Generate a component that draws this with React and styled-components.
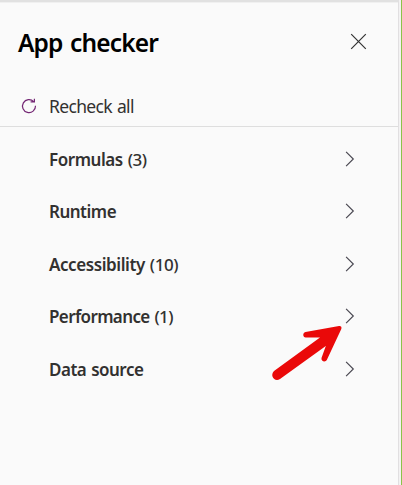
import React from "react";
import styled, { createGlobalStyle } from "styled-components";

const GlobalStyle = createGlobalStyle`
  * { box-sizing: border-box; }
  body { margin: 0; background: #fafafa; }
`;

const Frame = styled.div`
  position: relative;
  display: flex;
  width: 402px;
  height: 485px;
  overflow: hidden;
  background: #f3f2f3;
  border-right: 1px solid #8bc34a;
  font-family: "Noto Sans", "Open Sans", sans-serif;
`;

const Panel = styled.aside`
  width: 399px;
  height: 485px;
  background: #fafafa;
  border-top: 2px solid #e1e1e1;
  border-right: 1px solid #e1dfe1;
  box-shadow: inset 0 1px 0 #f0f0f0;
`;

const Header = styled.header`
  display: flex;
  align-items: center;
  justify-content: space-between;
  height: 82px;
  padding: 0 31px 0 18px;
`;

const Title = styled.h1`
  margin: 0 0 1px;
  font-size: 24.5px;
  font-weight: 600;
  line-height: 32px;
  letter-spacing: -0.85px;
  word-spacing: 2px;
  color: #000;
  white-space: nowrap;
`;

const IconButton = styled.button`
  display: flex;
  padding: 0;
  border: 0;
  background: none;
  margin-bottom: 4px;
`;

const RecheckBar = styled.button`
  display: flex;
  align-items: center;
  width: 100%;
  height: 43px;
  padding: 2px 0 0 20px;
  gap: 11px;
  border: 0;
  border-bottom: 1px solid #dedede;
  background: none;
  font-family: inherit;
`;

const Label = styled.span`
  font-size: ${(p) => p.$size || 17}px;
  font-weight: ${(p) => p.$weight || 600};
  line-height: 24px;
  letter-spacing: ${(p) => p.$tracking || 0}px;
  word-spacing: 1px;
  color: #323130;
  white-space: nowrap;
`;

const Count = styled.span`
  font-weight: 500;
`;

const List = styled.ul`
  margin: 0;
  padding: 6px 0 0;
  list-style: none;
`;

const Row = styled.li`
  display: flex;
  align-items: center;
  justify-content: space-between;
  height: 52.5px;
  padding: 0.6px 43px 0 49px;
`;

const ChevronIcon = styled.svg`
  margin-bottom: 2px;
`;

const Pointer = styled.svg`
  position: absolute;
  left: 265px;
  top: 315px;
`;

const rows = [
  { label: "Formulas", count: 3, tracking: -0.45 },
  { label: "Runtime", tracking: -0.5 },
  { label: "Accessibility", count: 10, tracking: -0.42 },
  { label: "Performance", count: 1, tracking: -0.63 },
  { label: "Data source", tracking: -0.5 },
];

const Chevron = () => (
  <ChevronIcon width="10" height="16" viewBox="0 0 10 16" fill="none" stroke="#484650" strokeWidth="1.15">
    <path d="M1.1 .8 8.3 8 1.1 15.2" />
  </ChevronIcon>
);

export default function App() {
  return (
    <Frame>
      <GlobalStyle />
      <Panel>
        <Header>
          <Title>App checker</Title>
          <IconButton aria-label="Close">
            <svg width="17" height="17" viewBox="0 0 17 17" stroke="#333" strokeWidth="1.2">
              <path d="M1.2 1.2 15.8 15.8M15.8 1.2 1.2 15.8" />
            </svg>
          </IconButton>
        </Header>
        <RecheckBar>
          <svg width="18" height="18" viewBox="0 0 18 18" fill="none" stroke="#742774" strokeWidth="1.2">
            <path d="M13.7 4.6A6.5 6.5 0 1 0 15.5 8.8M14.4 1.8V4.9H10.6" />
          </svg>
          <Label $size={17.5} $weight={400} $tracking={-0.65}>Recheck all</Label>
        </RecheckBar>
        <List>
          {rows.map((r) => (
            <Row key={r.label}>
              <Label $tracking={r.tracking}>
                {r.label}
                {r.count && <Count>{` (${r.count})`}</Count>}
              </Label>
              <Chevron />
            </Row>
          ))}
        </List>
      </Panel>
      <Pointer width="85" height="70" viewBox="265 315 85 70" fill="#ea0909">
        <path d="M339 326 305.5 332C302 333 303 337.8 306 337.4L320 337.6 274 371C269.5 375.5 274.5 382.5 280 379L325.8 346 321.5 358C320.8 361.5 325.5 362.5 326.8 360L341.3 329C342 327 341 325.8 339 326Z" />
      </Pointer>
    </Frame>
  );
}
